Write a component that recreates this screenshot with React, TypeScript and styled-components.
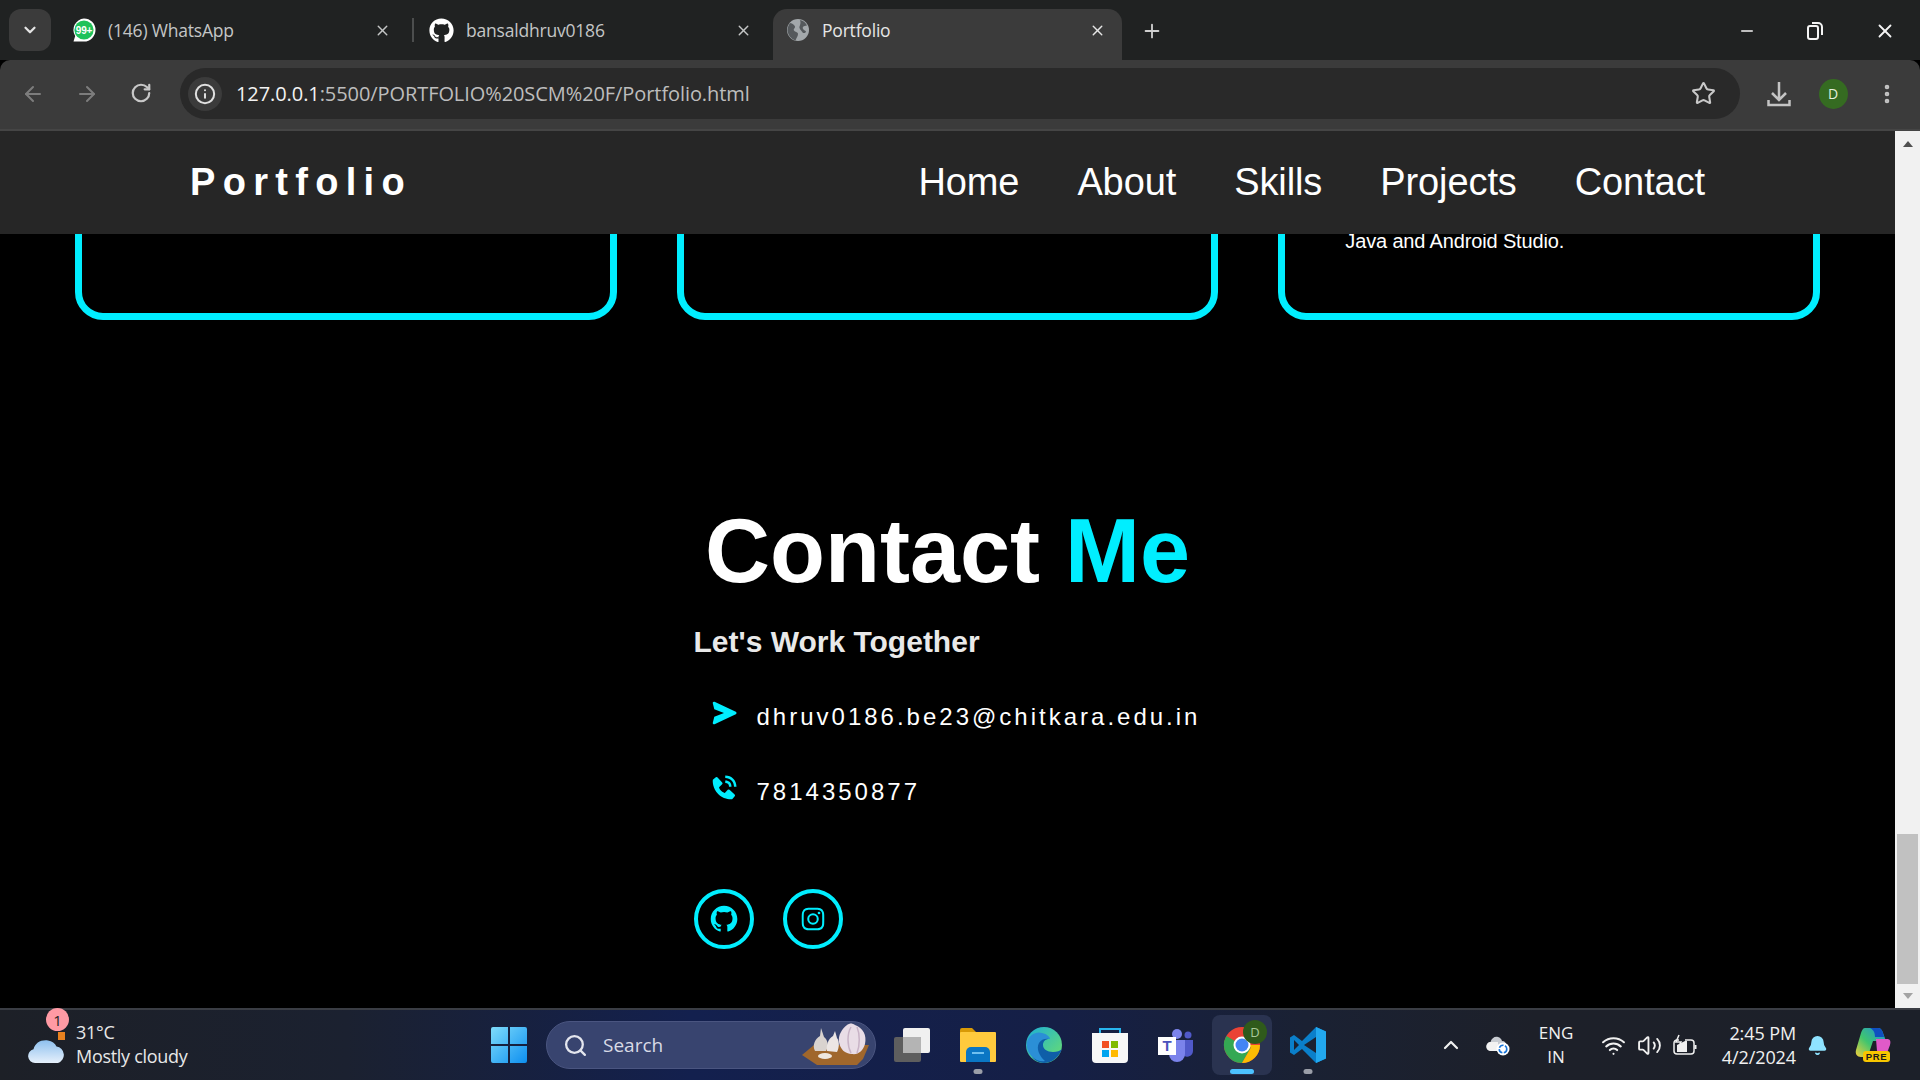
import React from 'react'
import styled, { createGlobalStyle } from 'styled-components'
import { ArrowLeft, ArrowRight, RotateCw, Info, Star, EllipsisVertical, X, Plus, Minus, ChevronDown, ChevronUp, Wifi, Volume2, Bell, Search } from 'lucide-react'
import { BiSolidSend, BiSolidPhoneCall, BiLogoGithub, BiLogoInstagram } from 'react-icons/bi'
import { FaGithub } from 'react-icons/fa'

const Global = createGlobalStyle`
  html, body { margin: 0; padding: 0; background: #000; overflow: hidden; }
  * { box-sizing: border-box; }
`

const Screen = styled.div`
  width: 1920px;
  height: 1080px;
  display: flex;
  flex-direction: column;
  font-family: "Liberation Sans", Arial, sans-serif;
  color: #fff;
`

/* browser chrome */
const TabStrip = styled.div`
  height: 60px;
  flex: none;
  background: #202222;
  display: flex;
  align-items: flex-end;
  padding-left: 9px;
  font-family: "Open Sans", sans-serif;
`
const TabMenu = styled.div`
  width: 42px;
  height: 42px;
  margin-bottom: 9px;
  margin-right: 13px;
  border-radius: 12px;
  background: #3b3b3b;
  display: flex;
  align-items: center;
  justify-content: center;
  color: #e4e4e4;
`
const Tab = styled.div<{ $active?: boolean; $w: number; $left: number }>`
  width: ${p => p.$w}px;
  height: 51px;
  padding: 0 ${p => (p.$active ? 16 : 21)}px 9px ${p => p.$left}px;
  display: flex;
  align-items: center;
  gap: 12px;
  font-size: 17.5px;
  letter-spacing: -0.2px;
  border-radius: 14px 14px 0 0;
  color: ${p => (p.$active ? '#e6e6e6' : '#c4c6c6')};
  background: ${p => (p.$active ? '#3b3b3b' : 'transparent')};
  svg { flex: none; }
`
const TabTitle = styled.span`
  flex: 1;
  white-space: nowrap;
`
const TabDivider = styled.div`
  width: 2px;
  height: 24px;
  margin: 0 0 18px 0;
  background: #4c4e4e;
`
const Favicon = styled.svg`
  width: 24px;
  height: 24px;
`
const NewTab = styled.div`
  margin: 0 0 18px 19px;
  color: #d0d0d0;
  display: flex;
`
const WindowButtons = styled.div`
  margin-left: auto;
  display: flex;
  width: 158px;
  margin-right: 24px;
  margin-bottom: 18px;
  justify-content: space-between;
  align-items: center;
  color: #f4f4f4;
`

const Toolbar = styled.div`
  height: 71px;
  flex: none;
  background: #3b3b3b;
  border-radius: 10px 10px 0 0;
  border-bottom: 2px solid #454545;
  display: flex;
  align-items: center;
  padding: 0 0 2px 0;
  color: #9a9a9a;
`
const NavIcon = styled.div<{ $on?: boolean }>`
  width: 54px;
  display: flex;
  justify-content: center;
  color: ${p => (p.$on ? '#c8c8c8' : '#7d7d7d')};
`
const NavIcons = styled.div`
  display: flex;
  margin-left: 6px;
  width: 174px;
`
const AddressBar = styled.div`
  width: 1560px;
  height: 51px;
  border-radius: 26px;
  background: #292929;
  display: flex;
  align-items: center;
  padding: 0 24px 0 8px;
  font-family: "Open Sans", sans-serif;
  font-size: 20px;
  letter-spacing: -0.08px;
  color: #bdbdbd;
`
const InfoChip = styled.div`
  width: 34px;
  height: 34px;
  border-radius: 50%;
  background: #3b3b3b;
  color: #e0e0e0;
  display: flex;
  align-items: center;
  justify-content: center;
  margin-right: 14px;
`
const Host = styled.span`
  color: #f2f2f2;
`
const Url = styled.div`
  flex: 1;
`
const ToolbarRight = styled.div`
  flex: 1;
  display: flex;
  align-items: center;
  color: #c4c4c4;
  padding-left: 27px;
  gap: 27.5px;
`
const Avatar = styled.div`
  width: 29px;
  height: 30px;
  border-radius: 50%;
  background: #356b21;
  color: #e4f0dc;
  font: 14px "Open Sans", sans-serif;
  display: flex;
  align-items: center;
  justify-content: center;
`

/* the page itself */
const Viewport = styled.div`
  flex: 1;
  min-height: 0;
  display: flex;
`
const Page = styled.main`
  flex: 1;
  min-width: 0;
  background: #000;
  overflow: hidden;
  display: flex;
  flex-direction: column;
`
const NavBar = styled.header`
  height: 103px;
  flex: none;
  position: relative;
  z-index: 2;
  background: #262626;
  display: flex;
  justify-content: space-between;
  align-items: center;
  padding: 0 190px;
`
const Logo = styled.div`
  font-size: 38px;
  font-weight: 700;
  letter-spacing: 7.3px;
`
const NavLinks = styled.nav`
  display: flex;
  gap: 58px;
`
const NavLink = styled.a`
  font-size: 38px;
  letter-spacing: -0.1px;
  color: #fff;
`
const Cards = styled.section`
  display: grid;
  grid-template-columns: repeat(3, 1fr);
  gap: 60px;
  padding: 0 75px;
  margin-top: -60px;
`
const Card = styled.div`
  height: 146px;
  border: 7px solid #00eeff;
  border-radius: 28px;
  padding: 45px 60px 0;
  font-size: 20px;
  letter-spacing: -0.15px;
  line-height: 30px;
`
const Contact = styled.section`
  width: 508px;
  margin: 176px auto 0;
`
const Heading = styled.h2`
  margin: 0;
  text-align: center;
  font-size: 90px;
  line-height: 110px;
  font-weight: 700;
  span { color: #00eeff; }
`
const SubHeading = styled.h3`
  margin: 18px 0 0;
  font-size: 30px;
  line-height: 36px;
  color: #e9e9e9;
`
const InfoList = styled.div`
  margin-top: 43px;
  display: flex;
  flex-direction: column;
  gap: 48px;
`
const InfoRow = styled.div`
  display: flex;
  align-items: center;
  height: 27px;
  padding-left: 15px;
  gap: 18px;
  font-size: 24px;
  letter-spacing: 3px;
  white-space: nowrap;
  svg { color: #00eeff; margin-top: -8px; flex: none; }
`
const Socials = styled.div`
  margin-top: 84px;
  display: flex;
  gap: 29px;
`
const SocialLink = styled.a`
  width: 60px;
  height: 60px;
  border-radius: 50%;
  border: 4px solid #00eeff;
  color: #00eeff;
  display: flex;
  align-items: center;
  justify-content: center;
`

/* page scrollbar */
const ScrollBar = styled.div`
  width: 25px;
  flex: none;
  background: #f1f1f1;
  display: flex;
  flex-direction: column;
  align-items: center;
`
const Arrow = styled.div<{ $down?: boolean }>`
  width: 0;
  height: 0;
  flex: none;
  margin: ${p => (p.$down ? '9px 0' : '10px 0 0')};
  border-left: 5.5px solid transparent;
  border-right: 5.5px solid transparent;
  border-bottom: ${p => (p.$down ? '0' : '6px solid #505050')};
  border-top: ${p => (p.$down ? '6px solid #a3a3a3' : '0')};
`
const Track = styled.div`
  flex: 1;
  width: 100%;
  display: flex;
  justify-content: center;
  align-items: flex-end;
`
const Thumb = styled.div`
  width: 21px;
  height: 150px;
  background: #c1c1c1;
`

/* windows taskbar */
const Taskbar = styled.footer`
  height: 72px;
  flex: none;
  display: flex;
  align-items: center;
  border-top: 2px solid #3a3d44;
  background: linear-gradient(90deg, #1d2027 0%, #1b2130 18%, #13204e 36%, #151f46 55%, #1a2133 68%, #1d2029 80%, #1c2029 100%);
  font-family: "Open Sans", sans-serif;
`
const Weather = styled.div`
  width: 491px;
  flex: none;
  display: flex;
  align-items: center;
  padding-left: 28px;
  gap: 10px;
  font-size: 18px;
  line-height: 24px;
  letter-spacing: -0.3px;
  color: #e8e8e8;
  position: relative;
`
const WeatherBadge = styled.div`
  position: absolute;
  left: 46px;
  top: -14px;
  width: 23px;
  height: 23px;
  border-radius: 50%;
  background: #ff9aa4;
  color: #222;
  font-size: 15px;
  display: flex;
  align-items: center;
  justify-content: center;
`
const WeatherText = styled.div`
  margin-top: -2px;
`
const StartButton = styled.svg`
  width: 36px;
  height: 36px;
  flex: none;
`
const SearchBox = styled.div`
  width: 330px;
  height: 48px;
  flex: none;
  margin-left: 19px;
  border-radius: 24px;
  background: #38446f;
  border: 1px solid #4a5580;
  display: flex;
  align-items: center;
  padding: 0 4px 0 16px;
  gap: 15px;
  font-size: 19px;
  color: #d8dbe6;
  svg { flex: none; }
`
const SearchLabel = styled.span`
  flex: 1;
`
const Pinned = styled.div`
  margin-left: 6px;
  flex: none;
  display: flex;
  width: 456px;
  height: 100%;
  justify-content: space-between;
  align-items: center;
`
const PinnedApp = styled.div<{ $active?: boolean }>`
  position: relative;
  width: 60px;
  height: 60px;
  border-radius: 8px;
  background: ${p => (p.$active ? '#2a3350' : 'transparent')};
  display: flex;
  align-items: center;
  justify-content: center;
`
const RunDot = styled.div<{ $active?: boolean }>`
  position: absolute;
  bottom: 1px;
  left: 50%;
  transform: translateX(-50%);
  width: ${p => (p.$active ? 24 : 9)}px;
  height: 5px;
  border-radius: 3px;
  background: ${p => (p.$active ? '#4cc2ff' : '#9a9ea8')};
`
const Tray = styled.div`
  flex: 1;
  min-width: 0;
  display: flex;
  align-items: center;
  margin-left: 101px;
  gap: 23px;
  color: #f0f0f0;
  font-size: 18px;
`
const Lang = styled.div`
  width: 60px;
  margin-left: -7px;
  text-align: center;
  line-height: 24px;
  font-size: 17px;
`
const TrayIcons = styled.div`
  display: flex;
  gap: 11px;
  margin-left: -8px;
  align-items: center;
`
const Clock = styled.div`
  width: 76px;
  text-align: right;
  line-height: 24px;
  letter-spacing: -0.1px;
  white-space: nowrap;
`
const ClockWrap = styled.div`
  margin-left: auto;
  display: flex;
  align-items: center;
  margin-right: 29px;
`
const BellSlot = styled.div`
  display: flex;
  margin: 0 27px 0 11px;
  color: #8fe3ff;
`

const WhatsAppIcon = () => (
  <Favicon viewBox="0 0 24 24">
    <path d="M12 0.5a11.5 11.5 0 0 1 0 23H1.5l1.7-5.4A11.5 11.5 0 0 1 12 0.5z" fill="#fff" />
    <circle cx="12" cy="12" r="9.6" fill="#1fc25a" />
    <text x="12" y="15.6" textAnchor="middle" fontSize="10" fontWeight="700" fill="#fff" fontFamily="Liberation Sans">99+</text>
  </Favicon>
)

const GlobeIcon = () => (
  <Favicon viewBox="0 0 24 24">
    <circle cx="12" cy="12" r="11" fill="#a3a8ab" />
    <path d="M4 5c3 .5 4.500 2 5 3.500S7 11 8 12.500s4 1.500 4 3.500-1.500 3.500-2.500 6.500C5 21 2 17 1.500 12.500 1.500 10 2.500 7 4 5zM14 2c3.500.5 6 3 7 5.500-2 .5-3 0-4 1.500s1 3 2.500 4-1 2.500-2.500 2c-1-2-3-3-3.500-5S15.500 6 14 2z" fill="#55595c" />
  </Favicon>
)

const RestoreIcon = () => (
  <svg width="16" height="18" viewBox="0 0 16 18" fill="none" stroke="currentColor" strokeWidth="2">
    <rect x="1" y="4" width="10" height="13" rx="2" />
    <path d="M5 1h6a4 4 0 0 1 4 4v8" />
  </svg>
)

const DownloadIcon = () => (
  <svg width="24" height="26" viewBox="0 0 24 26" fill="none" stroke="currentColor" strokeWidth="2.500">
    <path d="M12 1v17M5 12l7 7 7-7M1.500 19v5h21v-5" />
  </svg>
)

const CloudIcon = () => (
  <svg width="38" height="36" viewBox="0 0 38 36">
    <rect x="30" y="5" width="7" height="8" fill="#e8811f" />
    <defs>
      <linearGradient id="cl" x1="0" y1="0" x2="0" y2="1">
        <stop offset="0" stopColor="#8ec0ee" />
        <stop offset="1" stopColor="#e6f0fb" />
      </linearGradient>
    </defs>
    <path d="M7 36a7 7 0 0 1-1.500-13.800C7 16 13 12.500 20 13.500c4 .6 7 2.500 8.500 6A8.500 8.500 0 0 1 30 36z" fill="url(#cl)" />
  </svg>
)

const GarlicIcon = () => (
  <svg width="70" height="44" viewBox="0 0 70 44">
    <path d="M1 32l12-10h55l-6 14-6 6H16z" fill="#a0672c" />
    <path d="M46 2c3-2 5-2 8 0 8 3 12 10 10 19-2 7-7 11-13 10-7 0-12-5-13-12-1-7 3-13 8-17z" fill="#e9dde6" />
    <path d="M50 4c-4 7-4 18 0 26M56 4c3 7 3 18 0 26" stroke="#c8b3c6" strokeWidth="1.500" fill="none" />
    <path d="M14 28c-3-6 0-12 5-15l1-8 3 9c4 3 5 9 2 14z" fill="#d9d3cf" />
    <path d="M26 28c-1-6 1-12 6-15l2-5 2 7c3 4 2 10 0 14z" fill="#ece6e4" />
    <ellipse cx="24" cy="33" rx="7" ry="3" fill="#efe8df" />
  </svg>
)

const TaskViewIcon = () => (
  <svg width="36" height="36" viewBox="0 0 36 36">
    <rect x="0" y="10" width="27" height="25" rx="2" fill="#5e5e5e" />
    <rect x="9" y="1" width="27" height="25" rx="2" fill="#f0f0f0" />
    <rect x="9" y="10" width="18" height="16" fill="#b4b4b4" />
  </svg>
)

const ExplorerIcon = () => (
  <svg width="36" height="34" viewBox="0 0 36 34">
    <path d="M0 2a2 2 0 0 1 2-2h10l4 4H2v4H0z" fill="#d99a06" />
    <rect x="0" y="4" width="36" height="30" rx="1" fill="#ffca3d" />
    <path d="M6 34V24a5 5 0 0 1 5-5h14a5 5 0 0 1 5 5v10z" fill="#0a76c4" />
    <rect x="12" y="24" width="12" height="2" fill="#6fc0f0" />
  </svg>
)

const EdgeIcon = () => (
  <svg width="36" height="36" viewBox="0 0 36 36">
    <defs>
      <linearGradient id="eg" x1="0" y1="0" x2="1" y2="1">
        <stop offset="0" stopColor="#1baed8" />
        <stop offset="1" stopColor="#6ee06a" />
      </linearGradient>
    </defs>
    <circle cx="18" cy="18" r="18" fill="url(#eg)" />
    <path d="M36 22c-2 2-5 3-9 3-6 0-10-3-10-7s3-6 6-6c-3-3-9-3-14 1C3 18 3 28 9 33c3 2 6 3 9 3 8 0 15-6 18-14z" fill="#0f5ea8" />
    <path d="M1 15C3 8 10 4 16 6c5 1 8 4 8 6-4-1-9 0-11 4-3 5 0 13 6 18-9 2-20-8-18-19z" fill="#2b8fd6" />
  </svg>
)

const StoreIcon = () => (
  <svg width="36" height="36" viewBox="0 0 36 36">
    <path d="M8 7V2h20v5" fill="none" stroke="#28b5ee" strokeWidth="2" />
    <path d="M0 6h36v26a4 4 0 0 1-4 4H4a4 4 0 0 1-4-4z" fill="#f7f7f7" />
    <rect x="10" y="14" width="7" height="7" fill="#f25022" />
    <rect x="19" y="14" width="7" height="7" fill="#7fba00" />
    <rect x="10" y="23" width="7" height="7" fill="#00a4ef" />
    <rect x="19" y="23" width="7" height="7" fill="#ffb900" />
  </svg>
)

const TeamsIcon = () => (
  <svg width="36" height="34" viewBox="0 0 36 34">
    <circle cx="19" cy="6" r="5" fill="#7b83eb" />
    <circle cx="30" cy="7" r="3.500" fill="#5059c9" />
    <path d="M24 12h11v11a6 6 0 0 1-11 3z" fill="#5059c9" />
    <path d="M11 12h16v14a8 8 0 0 1-16 0z" fill="#7b83eb" />
    <rect x="0" y="9" width="18" height="18" fill="#fff" />
    <text x="9" y="23" textAnchor="middle" fontSize="15" fontWeight="700" fill="#4b53bc" fontFamily="Liberation Sans">T</text>
  </svg>
)

const ChromeIcon = () => (
  <svg width="50" height="50" viewBox="0 0 50 50">
    <g transform="translate(7 7)">
      <circle cx="18" cy="18" r="18" fill="#ea4335" />
      <path d="M18 18L2.400 9A18 18 0 0 0 18 36l9-15.500z" fill="#34a853" />
      <path d="M18 18h18A18 18 0 0 1 18 36l9-15.500z" fill="#fbbc04" />
      <circle cx="18" cy="18" r="8.500" fill="#fff" />
      <circle cx="18" cy="18" r="6.500" fill="#4285f4" />
    </g>
    <circle cx="38" cy="12" r="12" fill="#2f5a1b" />
    <text x="38" y="17" textAnchor="middle" fontSize="13" fill="#a9c99a" fontFamily="Open Sans">D</text>
  </svg>
)

const VsCodeIcon = () => (
  <svg width="36" height="36" viewBox="0 0 36 36">
    <path d="M26 0l10 4.500v27L26 36 12 22l-8 6-4-2.500v-15L4 8l8 6z" fill="#0a7fca" />
    <path d="M26 0l10 4.500v27L26 36z" fill="#22a8ee" />
    <path d="M26 10L14 18l12 8z" fill="#1b2130" />
    <path d="M4 13l5 5-5 5z" fill="#1b2130" />
  </svg>
)

const OneDriveIcon = () => (
  <svg width="24" height="22" viewBox="0 0 24 22">
    <path d="M5 17a4.500 4.500 0 0 1-.5-9C5.500 4 9 2 12 3c2 .6 3.500 2 4 4 3 0 4 2 4 4-2 3-6 6-9 6z" fill="#c8ccd2" />
    <path d="M0.500 13a4.500 4.500 0 0 0 4.500 4h7V8H4.500C2 8 .5 10 .5 13z" fill="#f2f2f2" />
    <circle cx="17" cy="15" r="6.500" fill="#fff" />
    <circle cx="17" cy="15" r="3.800" fill="none" stroke="#1673d8" strokeWidth="1.600" strokeDasharray="5 1.500" />
  </svg>
)

const BatteryIcon = () => (
  <svg width="24" height="22" viewBox="0 0 24 22" fill="none" stroke="currentColor" strokeWidth="1.500">
    <path d="M6 6H4a3 3 0 0 0-3 3v8a3 3 0 0 0 3 3h14a3 3 0 0 0 3-3V9a3 3 0 0 0-3-3h-6" />
    <path d="M22.500 11v4" strokeWidth="2" />
    <path d="M6 1L3 8h5l-3 6" />
    <path d="M4 18V11l8-4h2v11z" fill="currentColor" stroke="none" />
  </svg>
)

const CopilotIcon = () => (
  <svg width="36" height="36" viewBox="0 0 36 36">
    <defs>
      <linearGradient id="cp" x1="0" y1="1" x2="1" y2="0">
        <stop offset="0" stopColor="#f5d03a" />
        <stop offset=".45" stopColor="#3fc56f" />
        <stop offset="1" stopColor="#1e8fe0" />
      </linearGradient>
    </defs>
    <path d="M10 1h13c3 0 4 2 5 5l3 8H18l-4 12c-1 3-3 4-6 4H6c-4 0-6-3-5-7L6 6c1-3 2-5 4-5z" fill="url(#cp)" />
    <path d="M15 1h8c3 0 4 2 5 5l1 4h-9c0-4-1-7-5-9z" fill="#0f4fc0" />
    <path d="M21 12h11c3 0 4 2 3 6l-3 8c-1 3-3 4-6 4h-9c3-1 4-3 5-6z" fill="#e05ac8" />
    <rect x="8" y="24" width="27" height="11" rx="3" fill="#f7c600" />
    <text x="21.500" y="33" textAnchor="middle" fontSize="9.500" fontWeight="700" fill="#1c1c1c" letterSpacing=".6" fontFamily="Liberation Sans">PRE</text>
  </svg>
)

export default function App () {
  return <Screen>
    <Global />
    <TabStrip>
      <TabMenu><ChevronDown size={18} strokeWidth={3} /></TabMenu>
      <Tab $w={348} $left={8}>
        <WhatsAppIcon />
        <TabTitle>(146) WhatsApp</TabTitle>
        <X size={17} strokeWidth={2} />
      </Tab>
      <TabDivider />
      <Tab $w={359} $left={15}>
        <FaGithub size={25} color="#fff" />
        <TabTitle>bansaldhruv0186</TabTitle>
        <X size={17} strokeWidth={2} />
      </Tab>
      <Tab $active $w={349} $left={13}>
        <GlobeIcon />
        <TabTitle>Portfolio</TabTitle>
        <X size={17} strokeWidth={2} />
      </Tab>
      <NewTab><Plus size={22} strokeWidth={2} /></NewTab>
      <WindowButtons>
        <Minus size={18} strokeWidth={2} />
        <RestoreIcon />
        <X size={22} strokeWidth={2} />
      </WindowButtons>
    </TabStrip>

    <Toolbar>
      <NavIcons>
        <NavIcon><ArrowLeft size={24} /></NavIcon>
        <NavIcon><ArrowRight size={24} /></NavIcon>
        <NavIcon $on><RotateCw size={22} strokeWidth={2.4} /></NavIcon>
      </NavIcons>
      <AddressBar>
        <InfoChip><Info size={22} strokeWidth={2.2} /></InfoChip>
        <Url><Host>127.0.0.1</Host>:5500/PORTFOLIO%20SCM%20F/Portfolio.html</Url>
        <Star size={25} strokeWidth={2} color="#c8c8c8" />
      </AddressBar>
      <ToolbarRight>
        <DownloadIcon />
        <Avatar>D</Avatar>
        <EllipsisVertical size={24} strokeWidth={2.6} />
      </ToolbarRight>
    </Toolbar>

    <Viewport>
      <Page>
        <NavBar>
          <Logo>Portfolio</Logo>
          <NavLinks>
            <NavLink>Home</NavLink>
            <NavLink>About</NavLink>
            <NavLink>Skills</NavLink>
            <NavLink>Projects</NavLink>
            <NavLink>Contact</NavLink>
          </NavLinks>
        </NavBar>
        <Cards>
          <Card />
          <Card />
          <Card>Java and Android Studio.</Card>
        </Cards>
        <Contact>
          <Heading>Contact <span>Me</span></Heading>
          <SubHeading>Let's Work Together</SubHeading>
          <InfoList>
            <InfoRow><BiSolidSend size={30} />dhruv0186.be23@chitkara.edu.in</InfoRow>
            <InfoRow><BiSolidPhoneCall size={30} />7814350877</InfoRow>
          </InfoList>
          <Socials>
            <SocialLink><BiLogoGithub size={32} /></SocialLink>
            <SocialLink><BiLogoInstagram size={30} /></SocialLink>
          </Socials>
        </Contact>
      </Page>
      <ScrollBar>
        <Arrow />
        <Track><Thumb /></Track>
        <Arrow $down />
      </ScrollBar>
    </Viewport>

    <Taskbar>
      <Weather>
        <CloudIcon />
        <WeatherBadge>1</WeatherBadge>
        <WeatherText>31°C<br />Mostly cloudy</WeatherText>
      </Weather>
      <StartButton viewBox="0 0 36 36">
        <defs>
          <linearGradient id="win" x1="0" y1="0" x2="1" y2="1">
            <stop offset="0" stopColor="#7fdcfb" />
            <stop offset="1" stopColor="#0d8ff0" />
          </linearGradient>
        </defs>
        <path d="M0 2a2 2 0 0 1 2-2h15v17H0zM19 0h15a2 2 0 0 1 2 2v15H19zM0 19h17v17H2a2 2 0 0 1-2-2zM19 19h17v15a2 2 0 0 1-2 2H19z" fill="url(#win)" />
      </StartButton>
      <SearchBox>
        <Search size={25} strokeWidth={2.2} color="#e4e6ee" />
        <SearchLabel>Search</SearchLabel>
        <GarlicIcon />
      </SearchBox>
      <Pinned>
        <PinnedApp><TaskViewIcon /></PinnedApp>
        <PinnedApp><ExplorerIcon /><RunDot /></PinnedApp>
        <PinnedApp><EdgeIcon /></PinnedApp>
        <PinnedApp><StoreIcon /></PinnedApp>
        <PinnedApp><TeamsIcon /></PinnedApp>
        <PinnedApp $active><ChromeIcon /><RunDot $active /></PinnedApp>
        <PinnedApp><VsCodeIcon /><RunDot /></PinnedApp>
      </Pinned>
      <Tray>
        <ChevronUp size={24} strokeWidth={2.2} />
        <OneDriveIcon />
        <Lang>ENG<br />IN</Lang>
        <TrayIcons>
          <Wifi size={25} strokeWidth={2} />
          <Volume2 size={25} strokeWidth={1.8} />
          <BatteryIcon />
        </TrayIcons>
        <ClockWrap>
          <Clock>2:45 PM<br />4/2/2024</Clock>
          <BellSlot><Bell size={21} fill="currentColor" /></BellSlot>
          <CopilotIcon />
        </ClockWrap>
      </Tray>
    </Taskbar>
  </Screen>
}
